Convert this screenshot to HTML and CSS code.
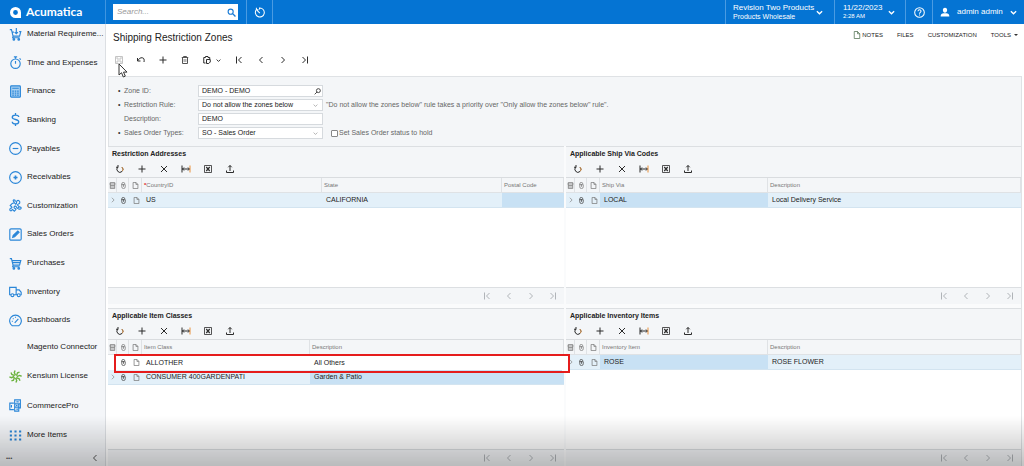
FILE: index.html
```html
<!DOCTYPE html>
<html lang="en">
<head>
<meta charset="utf-8">
<title>Shipping Restriction Zones</title>
<link rel="stylesheet" href="styles.css">
</head>
<body>
<svg class="sprite" aria-hidden="true">
  <symbol id="cart" viewBox="0 0 16 16"><path d="M1 2h2l2 8h8l1.500-5.500H4M5 10l-.5 2H13M4.500 7h9"/><circle cx="6" cy="14" r="1"/><circle cx="12" cy="14" r="1"/></symbol>
  <symbol id="cart-down" viewBox="0 0 16 16"><path d="M1 2h2l2 8h8l1.500-5.500h-2M4 5h2M5 10l-.5 2H13M9 0v7M7 5l2 2 2-2"/><circle cx="6" cy="14" r="1"/><circle cx="12" cy="14" r="1"/></symbol>
  <symbol id="stopwatch" viewBox="0 0 16 16"><circle cx="8" cy="9.500" r="5.800"/><path d="M8 9.500V6M6 1h4M8 1v2.500M13 3l1.500 1.500"/></symbol>
  <symbol id="calc" viewBox="0 0 16 16"><rect x="2" y="1" width="12" height="14" rx="1" fill="#a9d1f2"/><path d="M4 4h8M4 7.500h2M7 7.500h2M10 7.500h2M4 10h2M7 10h2M10 10h2M4 12.500h2M7 12.500h2M10 12.500h2"/></symbol>
  <symbol id="dollar" viewBox="0 0 16 16"><path d="M12 5c0-1.500-1.500-2.500-4-2.500S4 3.500 4 5.200 6 7.500 8 8s4 1 4 2.800-1.500 2.700-4 2.700-4-1-4-2.700M8 0v3M8 13v3" stroke-width="1.600"/></symbol>
  <symbol id="minus-circle" viewBox="0 0 16 16"><circle cx="8" cy="8" r="7.200"/><path d="M4.500 8h7"/></symbol>
  <symbol id="plus-circle" viewBox="0 0 16 16"><circle cx="8" cy="8" r="7.200"/><path d="M5.500 8h5M8 5.500v5" stroke-width="2"/></symbol>
  <symbol id="puzzle" viewBox="0 0 16 16"><path d="M6.500 4.500 8.500 6.500C10 6 8.500 3.500 10 2.200s4 .8 3.200 2.600-3 1-2.700 2.700L12.500 9.500 10.500 11.500C9 11.500 9.800 9 8 8.800S5.500 10.500 7 11.500s1.500.5 1.500 1.500L6.500 15 4.500 13C3 13 3.500 15 2 14.500S.8 12 2 11.500 4 11 3.500 10L1.500 8 4 5.500ZM6.500 4.500C5.500 3.500 4.500 1 6 1s2 1 1.500 2.500M12.500 9.500c1 1 2.500 0 2.500 1.500s-2 2-3.500 1"/></symbol>
  <symbol id="edit" viewBox="0 0 16 16"><rect x="1" y="1" width="14" height="14" rx="1.500"/><path d="m4.500 11.500.8-2.500 5.500-5.300 1.600 1.600-5.500 5.400Z" fill="currentColor"/></symbol>
  <symbol id="truck" viewBox="0 0 16 16"><path d="M2.500 12H.8V3h8v9H6M9 6h3.500L15 9v3h-1M9 12h1"/><circle cx="4.200" cy="12.500" r="1.800"/><circle cx="12" cy="12.500" r="1.800"/></symbol>
  <symbol id="gauge" viewBox="0 0 16 16"><path d="M4 14.500a7.200 7.200 0 1 1 8 0ZM7 11l4.500-5M3.500 9h1M8 3.500v1M4.800 5.500l.7.700"/></symbol>
  <symbol id="pinwheel" viewBox="0 0 16 16"><g stroke="#6cb33f" stroke-width="1.700"><path d="M8 6.500 6.500 3 7.500.5M9.200 7 10.500 3.500 13 2.500M9.600 8.200 13 6.700l2.500 1M9 9.500l3.500 1.300 1 2.500M8 9.700 9.500 13l-1 2.500M6.800 9 5.500 12.500 3 13.500M6.300 8 3 9.500.5 8.500M7 6.800 3.500 5.500l-1-2.500"/></g></symbol>
  <symbol id="blocks" viewBox="0 0 16 16"><path d="M7 1h7v5H7ZM7 6h5v4H7ZM7 10h5v5H7ZM6 5H1v8h5M14 6v5h-2M9 3.500h3M8.500 8h2M9 12.500h2M3 7.500v3"/></symbol>
  <symbol id="dots" viewBox="0 0 16 16"><path stroke-width="2.600" d="M1 3h2.600M6.700 3h2.600M12.400 3H15M1 8h2.600M6.700 8h2.600M12.400 8H15M1 13h2.600M6.700 13h2.600M12.400 13H15"/></symbol>
  <symbol id="search" viewBox="0 0 16 16"><circle cx="6.500" cy="6.500" r="4.500" stroke-width="2"/><path d="m10 10 5 5" stroke-width="2.500"/></symbol>
  <symbol id="lookup" viewBox="0 0 16 16"><circle cx="10" cy="6" r="4.500"/><path d="m7 9-5.500 5.500"/></symbol>
  <symbol id="history" viewBox="0 0 16 16"><path d="M3.500 3.800A6.500 6.500 0 1 0 8 1.500v2M4.500 5 8.500 9M3.500 1v3h3"/></symbol>
  <symbol id="help" viewBox="0 0 16 16"><circle cx="8" cy="8" r="7"/><path d="M5.800 6.300c0-3 4.500-2.800 4.400-.2 0 1.700-2.200 1.700-2.200 3.600M8 11v1.500"/></symbol>
  <symbol id="user" viewBox="0 0 16 16"><path fill="currentColor" stroke="none" d="M8 1c2.400 0 3.600 1.700 3.400 4S10 9 8 9 4.800 7.300 4.600 5 5.600 1 8 1ZM1 15c0-3.500 2-4.500 5-5h4c3 .5 5 1.500 5 5Z"/></symbol>
  <symbol id="down" viewBox="0 0 16 16"><path d="m2 5 6 6 6-6"/></symbol>
  <symbol id="prev" viewBox="0 0 16 16"><path d="M11 2 5 8l6 6"/></symbol>
  <symbol id="next" viewBox="0 0 16 16"><path d="m5 2 6 6-6 6"/></symbol>
  <symbol id="first" viewBox="0 0 16 16"><path d="M3 1v14M13 2 7 8l6 6"/></symbol>
  <symbol id="last" viewBox="0 0 16 16"><path d="M13 1v14M3 2l6 6-6 6"/></symbol>
  <symbol id="save" viewBox="0 0 16 16"><path d="M1 1h14v14H1ZM4 1v5h8V1M4 15v-5h8v5"/></symbol>
  <symbol id="undo" viewBox="0 0 16 16"><path d="M1 4v6h6M1.500 9.500C4 5 7 3 10.500 3.500S15 7 14 12"/></symbol>
  <symbol id="plus" viewBox="0 0 16 16"><path d="M1 8h14M8 1v14"/></symbol>
  <symbol id="trash" viewBox="0 0 16 16"><path d="M1.500 3h13M5 3V1h6v2M3 3v12h10V3"/><path d="M6 6v6M8 6v6M10 6v6" stroke-width="1"/></symbol>
  <symbol id="clip" viewBox="0 0 16 16"><path d="M5 14H1.500V3H5V1h5v2h3.500v3M7 7h7.500v5l-3 3H7Z"/></symbol>
  <symbol id="refresh" viewBox="0 0 16 16"><path d="M4 4a6 6 0 1 0 8 .3M4 0v4.500H0"/><path d="M12 4.300a6 6 0 0 1 1 8" stroke="#e09a50"/></symbol>
  <symbol id="times" viewBox="0 0 16 16"><path d="m2 2 12 12M14 2 2 14"/></symbol>
  <symbol id="fit" viewBox="0 0 20 16"><path d="M2 1v14M2 8h15M6 5 3 8l3 3M14 5l3 3-3 3"/><path d="M18 1v14" stroke="#e8903a"/></symbol>
  <symbol id="excel" viewBox="0 0 16 16"><path d="M1 1h14v14H1Z" stroke-width="1.600"/><path d="m4.500 4 7 8M11.500 4l-7 8" stroke-width="2.400"/></symbol>
  <symbol id="upload" viewBox="0 0 16 16"><path d="M8 12V1M4.500 4.500 8 1l3.500 3.500M1 11v4h14v-4"/></symbol>
  <symbol id="rows" viewBox="0 0 16 16"><path d="M3 1h10v14H3ZM1 4.500h14M3 8h10M3 11.500h10"/></symbol>
  <symbol id="pin" viewBox="0 0 16 16"><path d="M4 7V4.500a3.500 3.500 0 0 1 7 0M4 6h8v5a4 4 0 0 1-8 0ZM8 5v6"/></symbol>
  <symbol id="page" viewBox="0 0 16 16"><path d="M2.500 1H9l4.500 4.500V15h-11ZM9 1v4.500h4.500"/></symbol>
</svg>

<header class="topbar">
  <a class="brand" href="#"><svg class="brand-mark" viewBox="0 0 16 16"><path fill="#fff" fill-rule="evenodd" d="M8 0a8 8 0 0 1 8 8v8H8A8 8 0 1 1 8 0Zm0 4.500a3.500 3.500 0 1 0 0 7 3.500 3.500 0 0 0 0-7Z"/></svg>Acumatica</a>
  <form class="search"><input type="search" placeholder="Search..." aria-label="Search"><button type="button" aria-label="Search"><svg class="icon"><use href="#search"/></svg></button></form>
  <button class="cell history" aria-label="History"><svg class="icon icon-l"><use href="#history"/></svg></button>
  <button class="cell company"><span class="stack"><span class="big">Revision Two Products</span><span class="mid">Products Wholesale</span></span><svg class="icon icon-s"><use href="#down"/></svg></button>
  <button class="cell date"><span class="stack"><span class="big">11/22/2023</span><span class="tiny">2:28 AM</span></span><svg class="icon icon-s"><use href="#down"/></svg></button>
  <button class="cell help" aria-label="Help"><svg class="icon icon-l"><use href="#help"/></svg></button>
  <button class="cell user"><svg class="icon icon-m"><use href="#user"/></svg><span class="big">admin admin</span><svg class="icon icon-s"><use href="#down"/></svg></button>
</header>

<div class="layout">
  <nav class="sidebar">
    <div class="menu">
      <a href="#"><svg class="icon"><use href="#cart-down"/></svg><span>Material Requireme...</span></a>
      <a href="#"><svg class="icon"><use href="#stopwatch"/></svg><span>Time and Expenses</span></a>
      <a href="#"><svg class="icon"><use href="#calc"/></svg><span>Finance</span></a>
      <a href="#"><svg class="icon"><use href="#dollar"/></svg><span>Banking</span></a>
      <a href="#"><svg class="icon"><use href="#minus-circle"/></svg><span>Payables</span></a>
      <a href="#"><svg class="icon"><use href="#plus-circle"/></svg><span>Receivables</span></a>
      <a href="#"><svg class="icon"><use href="#puzzle"/></svg><span>Customization</span></a>
      <a href="#"><svg class="icon"><use href="#edit"/></svg><span>Sales Orders</span></a>
      <a href="#"><svg class="icon"><use href="#cart"/></svg><span>Purchases</span></a>
      <a href="#"><svg class="icon"><use href="#truck"/></svg><span>Inventory</span></a>
      <a href="#"><svg class="icon"><use href="#gauge"/></svg><span>Dashboards</span></a>
      <a class="short" href="#"><i class="icon"></i><span>Magento Connector</span></a>
      <a class="tall" href="#"><svg class="icon"><use href="#pinwheel"/></svg><span>Kensium License</span></a>
      <a class="short" href="#"><svg class="icon"><use href="#blocks"/></svg><span>CommercePro</span></a>
      <a class="tall" href="#"><svg class="icon"><use href="#dots"/></svg><span>More Items</span></a>
    </div>
    <div class="menu-foot"><button aria-label="Options">•••</button><button aria-label="Collapse"><svg class="icon"><use href="#prev"/></svg></button></div>
  </nav>

  <main class="main">
    <div class="head">
      <h1>Shipping Restriction Zones</h1>
      <div class="links">
        <a href="#"><svg class="icon note"><use href="#page"/></svg>NOTES</a>
        <a href="#">FILES</a>
        <a href="#">CUSTOMIZATION</a>
        <a href="#">TOOLS <i class="caret"></i></a>
      </div>
    </div>

    <div class="tools page-tools">
      <button class="off" aria-label="Save"><svg class="icon"><use href="#save"/></svg></button>
      <button aria-label="Undo"><svg class="icon"><use href="#undo"/></svg></button>
      <button aria-label="Add"><svg class="icon"><use href="#plus"/></svg></button>
      <button class="soft" aria-label="Delete"><svg class="icon"><use href="#trash"/></svg></button>
      <button class="wide" aria-label="Clipboard"><svg class="icon"><use href="#clip"/></svg><svg class="icon drop"><use href="#down"/></svg></button>
      <button aria-label="First"><svg class="icon"><use href="#first"/></svg></button>
      <button aria-label="Previous"><svg class="icon"><use href="#prev"/></svg></button>
      <button aria-label="Next"><svg class="icon"><use href="#next"/></svg></button>
      <button aria-label="Last"><svg class="icon"><use href="#last"/></svg></button>
      <svg class="pointer" viewBox="0 0 10 15"><path d="M1 1v11l2.500-2.300L5.300 14l2-.9-1.800-4H9Z" fill="#fff" stroke="#333"/></svg>
    </div>

    <form class="fields">
      <label class="req" for="zone">Zone ID:</label>
      <div class="box"><input id="zone" type="text" value="DEMO - DEMO"><svg class="icon dark"><use href="#lookup"/></svg></div>
      <span></span>
      <label class="req" for="rule">Restriction Rule:</label>
      <div class="box"><select id="rule"><option>Do not allow the zones below</option></select><svg class="icon"><use href="#down"/></svg></div>
      <span class="hint">"Do not allow the zones below" rule takes a priority over "Only allow the zones below" rule".</span>
      <label for="desc">Description:</label>
      <div class="box"><input id="desc" type="text" value="DEMO"></div>
      <span></span>
      <label class="req" for="types">Sales Order Types:</label>
      <div class="box"><select id="types"><option>SO - Sales Order</option></select><svg class="icon"><use href="#down"/></svg></div>
      <label class="check"><input type="checkbox">Set Sales Order status to hold</label>
    </form>

    <div class="panels">
      <section class="panel">
        <h2>Restriction Addresses</h2>
        <div class="tools">
          <button aria-label="Refresh"><svg class="icon"><use href="#refresh"/></svg></button>
          <button aria-label="Add"><svg class="icon"><use href="#plus"/></svg></button>
          <button aria-label="Delete"><svg class="icon"><use href="#times"/></svg></button>
          <button aria-label="Fit"><svg class="icon fit"><use href="#fit"/></svg></button>
          <button aria-label="Export"><svg class="icon"><use href="#excel"/></svg></button>
          <button aria-label="Upload"><svg class="icon"><use href="#upload"/></svg></button>
        </div>
        <div class="grid">
          <table>
            <colgroup><col class="c-mark"><col class="c-file"><col class="c-note"><col class="c-country"><col><col class="c-postal"></colgroup>
            <thead><tr><th><svg class="icon"><use href="#rows"/></svg></th><th><svg class="icon"><use href="#pin"/></svg></th><th><svg class="icon"><use href="#page"/></svg></th><th><b class="star">*</b>CountryID</th><th>State</th><th>Postal Code</th></tr></thead>
            <tbody><tr class="current"><td><svg class="icon"><use href="#next"/></svg></td><td><svg class="icon dark"><use href="#pin"/></svg></td><td><svg class="icon"><use href="#page"/></svg></td><td>US</td><td>CALIFORNIA</td><td class="active"></td></tr></tbody>
          </table>
        </div>
        <div class="pager"><button aria-label="First"><svg class="icon"><use href="#first"/></svg></button><button aria-label="Previous"><svg class="icon"><use href="#prev"/></svg></button><button aria-label="Next"><svg class="icon"><use href="#next"/></svg></button><button aria-label="Last"><svg class="icon"><use href="#last"/></svg></button></div>
      </section>

      <section class="panel">
        <h2>Applicable Ship Via Codes</h2>
        <div class="tools">
          <button aria-label="Refresh"><svg class="icon"><use href="#refresh"/></svg></button>
          <button aria-label="Add"><svg class="icon"><use href="#plus"/></svg></button>
          <button aria-label="Delete"><svg class="icon"><use href="#times"/></svg></button>
          <button aria-label="Fit"><svg class="icon fit"><use href="#fit"/></svg></button>
          <button aria-label="Export"><svg class="icon"><use href="#excel"/></svg></button>
          <button aria-label="Upload"><svg class="icon"><use href="#upload"/></svg></button>
        </div>
        <div class="grid">
          <table>
            <colgroup><col class="c-mark"><col class="c-file"><col class="c-note"><col class="c-item"><col></colgroup>
            <thead><tr><th><svg class="icon"><use href="#rows"/></svg></th><th><svg class="icon"><use href="#pin"/></svg></th><th><svg class="icon"><use href="#page"/></svg></th><th>Ship Via</th><th>Description</th></tr></thead>
            <tbody><tr class="current"><td><svg class="icon"><use href="#next"/></svg></td><td><svg class="icon dark"><use href="#pin"/></svg></td><td><svg class="icon"><use href="#page"/></svg></td><td class="active">LOCAL</td><td>Local Delivery Service</td></tr></tbody>
          </table>
        </div>
        <div class="pager"><button aria-label="First"><svg class="icon"><use href="#first"/></svg></button><button aria-label="Previous"><svg class="icon"><use href="#prev"/></svg></button><button aria-label="Next"><svg class="icon"><use href="#next"/></svg></button><button aria-label="Last"><svg class="icon"><use href="#last"/></svg></button></div>
      </section>

      <section class="panel">
        <h2>Applicable Item Classes</h2>
        <div class="tools">
          <button aria-label="Refresh"><svg class="icon"><use href="#refresh"/></svg></button>
          <button aria-label="Add"><svg class="icon"><use href="#plus"/></svg></button>
          <button aria-label="Delete"><svg class="icon"><use href="#times"/></svg></button>
          <button aria-label="Fit"><svg class="icon fit"><use href="#fit"/></svg></button>
          <button aria-label="Export"><svg class="icon"><use href="#excel"/></svg></button>
          <button aria-label="Upload"><svg class="icon"><use href="#upload"/></svg></button>
        </div>
        <div class="grid">
          <table>
            <colgroup><col class="c-mark"><col class="c-file"><col class="c-note"><col class="c-item"><col></colgroup>
            <thead><tr><th><svg class="icon"><use href="#rows"/></svg></th><th><svg class="icon"><use href="#pin"/></svg></th><th><svg class="icon"><use href="#page"/></svg></th><th>Item Class</th><th>Description</th></tr></thead>
            <tbody>
              <tr><td></td><td><svg class="icon dark"><use href="#pin"/></svg></td><td><svg class="icon"><use href="#page"/></svg></td><td>ALLOTHER</td><td>All Others</td></tr>
              <tr class="current"><td><svg class="icon"><use href="#next"/></svg></td><td><svg class="icon dark"><use href="#pin"/></svg></td><td><svg class="icon"><use href="#page"/></svg></td><td>CONSUMER 400GARDENPATI</td><td class="active">Garden &amp; Patio</td></tr>
            </tbody>
          </table>
          <div class="callout"></div>
        </div>
        <div class="pager"><button aria-label="First"><svg class="icon"><use href="#first"/></svg></button><button aria-label="Previous"><svg class="icon"><use href="#prev"/></svg></button><button aria-label="Next"><svg class="icon"><use href="#next"/></svg></button><button aria-label="Last"><svg class="icon"><use href="#last"/></svg></button></div>
      </section>

      <section class="panel">
        <h2>Applicable Inventory Items</h2>
        <div class="tools">
          <button aria-label="Refresh"><svg class="icon"><use href="#refresh"/></svg></button>
          <button aria-label="Add"><svg class="icon"><use href="#plus"/></svg></button>
          <button aria-label="Delete"><svg class="icon"><use href="#times"/></svg></button>
          <button aria-label="Fit"><svg class="icon fit"><use href="#fit"/></svg></button>
          <button aria-label="Export"><svg class="icon"><use href="#excel"/></svg></button>
          <button aria-label="Upload"><svg class="icon"><use href="#upload"/></svg></button>
        </div>
        <div class="grid">
          <table>
            <colgroup><col class="c-mark"><col class="c-file"><col class="c-note"><col class="c-item"><col></colgroup>
            <thead><tr><th><svg class="icon"><use href="#rows"/></svg></th><th><svg class="icon"><use href="#pin"/></svg></th><th><svg class="icon"><use href="#page"/></svg></th><th>Inventory Item</th><th>Description</th></tr></thead>
            <tbody><tr class="current"><td><svg class="icon"><use href="#next"/></svg></td><td><svg class="icon dark"><use href="#pin"/></svg></td><td><svg class="icon"><use href="#page"/></svg></td><td class="active">ROSE</td><td>ROSE FLOWER</td></tr></tbody>
          </table>
        </div>
        <div class="pager"><button aria-label="First"><svg class="icon"><use href="#first"/></svg></button><button aria-label="Previous"><svg class="icon"><use href="#prev"/></svg></button><button aria-label="Next"><svg class="icon"><use href="#next"/></svg></button><button aria-label="Last"><svg class="icon"><use href="#last"/></svg></button></div>
      </section>
    </div>
  </main>
</div>
<div class="shade"></div>
</body>
</html>
```
FILE: styles.css
```css
* { box-sizing: border-box; }
body {
  margin: 0;
  height: 100vh;
  display: flex;
  flex-direction: column;
  font: 7px/10px "Liberation Sans", Arial, sans-serif;
  color: #222;
  background: #fff;
}
button, input, select { font: inherit; color: inherit; margin: 0; padding: 0; border: 0; background: none; border-radius: 0; }
button { display: flex; align-items: center; justify-content: center; }
a { color: inherit; text-decoration: none; }
.sprite { position: absolute; width: 0; height: 0; }
.icon { width: 8px; height: 8px; flex: none; display: block; fill: none; stroke: currentColor; stroke-width: 2; }

/* top bar */
.topbar { display: flex; flex: none; height: 24px; background: #0574d3; color: #fff; }
.brand { width: 106px; display: flex; align-items: center; gap: 5px; padding-left: 10px; font: 700 12px/16px Lato, sans-serif; border-right: 1px solid #3f95e0; }
.brand-mark { width: 11px; height: 11px; }
.search { display: flex; align-items: center; margin: 4px 8px 4px 7px; width: 125px; background: #fff; }
.search input { flex: 1; min-width: 0; padding-left: 4px; font-size: 8px; font-style: italic; outline: 0; }
.search input::placeholder { color: #999; }
.search button { width: 14px; color: #1b7cd6; }
.search .icon { width: 9px; height: 9px; }
.cell { border-left: 1px solid #4a9be2; gap: 4px; text-align: left; }
.history { width: 27px; border-right: 1px solid #4a9be2; }
.company { width: 109px; margin-left: auto; justify-content: flex-start; padding-left: 7px; gap: 2px; }
.date { width: 71px; justify-content: flex-start; padding-left: 8px; gap: 6px; }
.help { width: 27px; }
.user { width: 92px; justify-content: flex-start; padding-left: 7px; gap: 7px; }
.stack { display: flex; flex-direction: column; }
.stack span { line-height: 9px; }
.big { font-size: 8px; }
.tiny { font-size: 6px; }
.icon-s { width: 7px; height: 7px; stroke-width: 3; }
.icon-m { width: 10px; height: 10px; }
.icon-l { width: 11px; height: 11px; stroke-width: 1.5; }

.layout { flex: 1; display: flex; min-height: 0; }

/* module menu */
.sidebar { width: 106px; flex: none; display: flex; flex-direction: column; background: #f4f6f9; border-right: 1px solid #dcdfe3; }
.menu { flex: 1; display: flex; flex-direction: column; justify-content: space-between; }
.menu a { height: 20px; display: flex; align-items: center; gap: 5px; padding-left: 9px; font-size: 8px; }
.menu .short { height: 15px; }
.menu .tall { height: 27px; }
.menu span { white-space: nowrap; }
.menu .icon { width: 13px; height: 13px; color: #2a86d8; stroke-width: 1.4; }
.menu-foot { height: 17px; display: flex; align-items: center; justify-content: space-between; padding: 0 6px; font-size: 6px; color: #555; }

/* page */
.main { flex: 1; min-width: 0; display: flex; flex-direction: column; padding: 0 2px; }
.head { height: 26px; flex: none; display: flex; justify-content: space-between; padding: 0 4px 0 5px; }
h1 { margin: 0; font-size: 10px; line-height: 27px; font-weight: 400; }
.links { display: flex; gap: 14px; font-size: 6px; line-height: 22px; }
.links a { display: flex; align-items: center; height: 22px; gap: 1px; }
.note { stroke-width: 1.5; color: #4f6f4f; }
.caret { border: 2px solid transparent; border-top-color: #333; margin: 2px 0 0 2px; }
.tools { display: flex; flex: none; padding-left: 1px; }
.tools button { width: 22px; height: 17px; color: #2b2b2b; }
.tools .fit { width: 10px; }
.page-tools { position: relative; height: 26px; padding-left: 0; }
.page-tools button { height: 20px; }
.page-tools .wide { width: 32px; gap: 5px; }
.page-tools .drop { width: 5px; height: 5px; stroke-width: 3; }
.tools .off { color: #c4c4c4; }
.tools .soft { color: #555; }
.pointer { position: absolute; left: 10px; top: 13px; width: 10px; height: 15px; }

.fields { display: grid; grid-template-columns: 80px 125px 1fr; gap: 2px 0; grid-auto-rows: 12px; align-items: center; padding: 8px 9px 7px; background: #f4f6f8; border: solid #dfe2e5; border-width: 1px 1px 0; color: #666; flex: none; }
.fields > label { padding-left: 6px; }
.fields .req { padding-left: 0; }
.req::before { content: "•"; display: inline-block; width: 6px; color: #333; }
.box { display: grid; height: 12px; border: 1px solid #d6dade; background: #fff; color: #222; align-items: center; }
.box > * { grid-area: 1 / 1; }
.box input, .box select { width: 100%; height: 10px; padding-left: 3px; appearance: none; outline: 0; }
.box .icon { width: 5px; height: 5px; margin-right: 4px; justify-self: end; pointer-events: none; color: #888; }
.box .dark { width: 7px; height: 7px; margin-right: 1px; color: #333; }
.hint { padding-left: 3px; white-space: nowrap; }
.fields .check { display: flex; align-items: center; gap: 1px; padding-left: 8px; }
.check input { appearance: none; width: 7px; height: 7px; border: 1px solid #888; border-radius: 1px; background: #fff; }

/* detail grids */
.panels { flex: 1; min-height: 0; display: grid; grid-template-columns: 456fr 455fr; grid-template-rows: 1fr 1fr; gap: 4px 2px; border-right: 1px solid #dfe2e5; background: #fafbfc; }
.panel { display: flex; flex-direction: column; min-width: 0; min-height: 0; background: #f4f6f8; border-top: 1px solid #dcdfe2; }
h2 { margin: 0; padding-left: 4px; font-size: 7px; line-height: 13px; font-weight: 700; }
.grid { flex: 1; background: #fff; position: relative; border-top: 1px solid #d9dcdf; }
table { width: 100%; table-layout: fixed; border-collapse: separate; border-spacing: 0; }
.c-mark { width: 9px; }
.c-file { width: 12px; }
.c-note { width: 13px; }
.c-country { width: 180px; }
.c-item { width: 168px; }
.c-postal { width: 62px; }
th, td { height: 15px; padding: 0 0 0 2px; text-align: left; font-weight: 400; white-space: nowrap; }
th { font-size: 6px; color: #777; background: #f4f6f8; border-right: 1px solid #dfe2e5; border-bottom: 1px solid #dfe2e5; }
td { padding-left: 4px; }
th:nth-child(-n+3), td:nth-child(-n+3) { padding-left: 1px; }
th .icon, td .icon { width: 7px; height: 7px; stroke-width: 1.7; color: #777; margin: 0 auto; }
td:first-child .icon { width: 6px; height: 6px; }
td .dark { color: #444; }
.star { color: #e02020; }
.current td { background: #e3f0f9; border-bottom: 1px solid #d3e4f0; }
.current .active { background: #c8e1f4; }
.pager { flex: none; height: 17px; display: flex; justify-content: flex-end; border-top: 1px solid #dcdfe2; }
.pager button { width: 22px; color: #b0b4b8; }
.callout { position: absolute; z-index: 2; left: 6px; right: -6px; top: 14px; height: 19px; border: 2px solid #e51c1c; background: linear-gradient(#fff, #fff) right / 6px 100% no-repeat; pointer-events: none; }

.shade { position: fixed; z-index: 3; inset: auto 0 0; height: 50px; background: linear-gradient(transparent, rgba(0, 0, 0, .24)); pointer-events: none; }
```
